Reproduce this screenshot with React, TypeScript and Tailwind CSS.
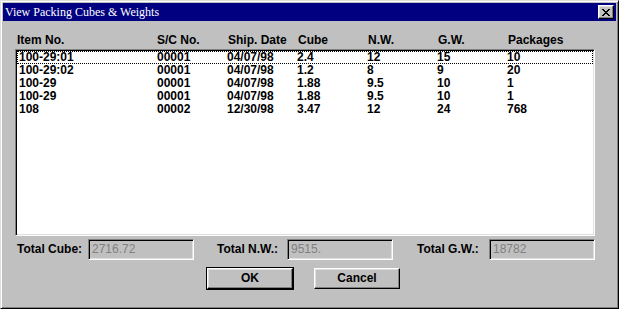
const rows = [
  { item: "100-29:01", sc: "00001", date: "04/07/98", cube: "2.4", nw: "12", gw: "15", pkg: "10" },
  { item: "100-29:02", sc: "00001", date: "04/07/98", cube: "1.2", nw: "8", gw: "9", pkg: "20" },
  { item: "100-29", sc: "00001", date: "04/07/98", cube: "1.88", nw: "9.5", gw: "10", pkg: "1" },
  { item: "100-29", sc: "00001", date: "04/07/98", cube: "1.88", nw: "9.5", gw: "10", pkg: "1" },
  { item: "108", sc: "00002", date: "12/30/98", cube: "3.47", nw: "12", gw: "24", pkg: "768" },
];

const sunken =
  "border border-t-[#808080] border-l-[#808080] border-b-white border-r-white shadow-[inset_1px_1px_0_#000,inset_-1px_-1px_0_#dfdfdf]";

function Field({ label, value, labelW, ml }: { label: string; value: string; labelW: string; ml: string }) {
  return (
    <div className={`flex items-center ${ml}`}>
      <span className={`${labelW} font-bold`}>{label}</span>
      <div className={`w-[106px] h-[21px] ${sunken} px-[3px] flex items-center text-[#808080] font-normal`}>
        {value}
      </div>
    </div>
  );
}

function Button({ label, isDefault }: { label: string; isDefault?: boolean }) {
  const bevel =
    "border border-t-white border-l-white border-b-black border-r-black shadow-[inset_-1px_-1px_0_#808080,inset_1px_1px_0_#dfdfdf]";
  return (
    <div className={`w-[88px] h-[23px] ${isDefault ? "border border-black" : "p-[1px]"}`}>
      <div className={`w-full h-full ${bevel} flex items-center justify-center font-bold`}>{label}</div>
    </div>
  );
}

export default function App() {
  return (
    <div
      className="w-[619px] h-[309px] bg-[#c0c0c0] border border-t-[#dfdfdf] border-l-[#dfdfdf] border-b-black border-r-black shadow-[inset_1px_1px_0_#fff,inset_-1px_-1px_0_#808080] p-[2px] flex flex-col text-[12px] leading-[13px] text-black"
      style={{ fontFamily: '"Liberation Sans", Arial, sans-serif' }}
    >
      {/* title bar */}
      <div className="h-[18px] bg-[#000080] flex items-center justify-between pl-[2px] pr-[2px]">
        <span className="text-white text-[12px]" style={{ fontFamily: '"Liberation Serif", "Times New Roman", serif' }}>
          View Packing Cubes &amp; Weights
        </span>
        <div className="w-[16px] h-[14px] bg-[#c0c0c0] border border-t-white border-l-white border-b-black border-r-black shadow-[inset_-1px_-1px_0_#808080,inset_1px_1px_0_#dfdfdf] flex items-center justify-center">
          <svg width="8" height="7" viewBox="0 0 8 7" shapeRendering="crispEdges">
            <path d="M0 0h2v1h-2zM6 0h2v1h-2zM1 1h2v1h-2zM5 1h2v1h-2zM2 2h4v1h-4zM3 3h2v1h-2zM2 4h4v1h-4zM1 5h2v1h-2zM5 5h2v1h-2zM0 6h2v1h-2zM6 6h2v1h-2z" fill="#000" />
          </svg>
        </div>
      </div>

      {/* column headers */}
      <div className="mt-[13px] pl-[14px] grid grid-cols-[140px_71px_70px_70px_70px_70px_1fr] font-bold h-[13px]">
        <span>Item No.</span>
        <span>S/C No.</span>
        <span>Ship. Date</span>
        <span>Cube</span>
        <span>N.W.</span>
        <span>G.W.</span>
        <span>Packages</span>
      </div>

      {/* list */}
      <div className={`ml-[12px] mt-[2px] w-[580px] h-[187px] bg-white ${sunken} p-[1px] font-bold`}>
        {rows.map((r, i) => (
          <div
            key={i}
            className={`h-[13px] pl-[2px] grid grid-cols-[138px_70px_70px_70px_70px_70px_1fr] ${
              i === 0 ? "outline-1 outline-dotted outline-black -outline-offset-1" : ""
            }`}
          >
            <span>{r.item}</span>
            <span>{r.sc}</span>
            <span>{r.date}</span>
            <span>{r.cube}</span>
            <span>{r.nw}</span>
            <span>{r.gw}</span>
            <span>{r.pkg}</span>
          </div>
        ))}
      </div>

      {/* totals */}
      <div className="mt-[3px] pl-[14px] flex">
        <Field label="Total Cube:" value="2716.72" labelW="w-[71px]" ml="" />
        <Field label="Total N.W.:" value="9515." labelW="w-[70px]" ml="ml-[23px]" />
        <Field label="Total G.W.:" value="18782" labelW="w-[72px]" ml="ml-[24px]" />
      </div>

      {/* buttons */}
      <div className="mt-[7px] pl-[203px] flex gap-[19px]">
        <Button label="OK" isDefault />
        <Button label="Cancel" />
      </div>
    </div>
  );
}
